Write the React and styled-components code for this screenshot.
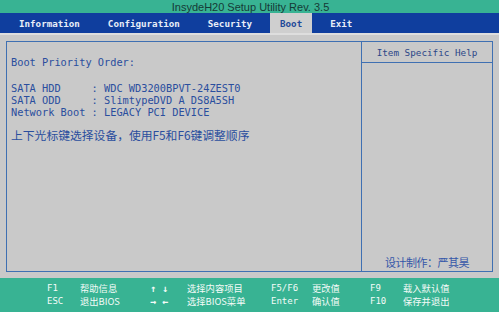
import styled, { createGlobalStyle } from "styled-components";

const Global = createGlobalStyle`
  html, body { margin: 0; padding: 0; }
  body { width: 499px; height: 312px; overflow: hidden; background: #c9c9c9; }
`;

const Screen = styled.div`
  width: 499px;
  height: 312px;
  display: flex;
  flex-direction: column;
  background: #c9c9c9;
`;

const TitleBar = styled.div`
  height: 13px;
  background: #38b393;
  color: #163a36;
  font-family: "Liberation Sans", Arial, sans-serif;
  font-size: 11px;
  line-height: 14px;
  text-align: center;
  padding-left: 2px;
`;

const MenuBar = styled.div`
  height: 20px;
  background: #0f3e9e;
  display: flex;
  gap: 8px;
  padding-left: 9px;
`;

const Tab = styled.div`
  padding: 0 10px;
  line-height: 21px;
  font-family: "DejaVu Sans Mono", monospace;
  font-weight: bold;
  font-size: 9.2px;
  color: ${(p) => (p.$active ? "#1f4a9a" : "#e8eef8")};
  background: ${(p) => (p.$active ? "#cfcfcf" : "transparent")};
`;

const Body = styled.div`
  flex: 1;
  border-top: 2px solid #dedede;
  padding: 6px;
  display: flex;
`;

const Frame = styled.div`
  flex: 1;
  border: 1px solid #3f70b2;
  display: grid;
  grid-template-columns: 1fr 130px;
`;

const Main = styled.div`
  border-right: 1px solid #3f70b2;
  padding: 14px 4px;
  color: #2a4e9e;
  font-family: "DejaVu Sans Mono", monospace;
  font-size: 10.3px;
  line-height: 12px;
`;

const Line = styled.div`
  white-space: pre;
  margin-bottom: ${(p) => p.$gap || 0}px;
`;

const Note = styled.div`
  font-family: "Noto Sans CJK SC", sans-serif;
  font-size: 11.8px;
  line-height: 14px;
`;

const Help = styled.div`
  display: flex;
  flex-direction: column;
`;

const HelpHead = styled.div`
  height: 20px;
  border-bottom: 1px solid #3f70b2;
  text-align: center;
  line-height: 21px;
  color: #2c4688;
  font-family: "DejaVu Sans Mono", monospace;
  font-size: 9.3px;
`;

const Credit = styled.div`
  margin-top: auto;
  padding-bottom: 2px;
  text-align: center;
  color: #3556a8;
  font-family: "Noto Sans CJK SC", sans-serif;
  font-size: 11px;
  line-height: 14px;
  letter-spacing: -0.5px;
`;

const Footer = styled.div`
  height: 34px;
  background: #38b393;
  display: grid;
  grid-template-columns: 33px 70px 37px 84px 41px 58px 33px 1fr;
  grid-auto-rows: 13px;
  align-content: center;
  padding-left: 47px;
  color: #f4fbf8;
`;

const Key = styled.span`
  font-family: "DejaVu Sans Mono", monospace;
  font-size: ${(p) => (p.$arrow ? 10 : 9)}px;
  font-weight: ${(p) => (p.$arrow ? "bold" : "normal")};
  line-height: 13px;
  height: 13px;
  white-space: pre;
  overflow: hidden;
`;

const Desc = styled.span`
  font-family: "Noto Sans CJK SC", sans-serif;
  font-size: 9.3px;
  line-height: 13px;
  height: 13px;
  overflow: hidden;
`;

const keys = [
  ["F1", "帮助信息", "↑ ↓", "选择内容项目", "F5/F6", "更改值", "F9", "载入默认值"],
  ["ESC", "退出BIOS", "→ ←", "选择BIOS菜单", "Enter", "确认值", "F10", "保存并退出"],
];

export default function App() {
  return (
    <Screen>
      <Global />
      <TitleBar>InsydeH20 Setup Utility Rev. 3.5</TitleBar>
      <MenuBar>
        <Tab>Information</Tab>
        <Tab>Configuration</Tab>
        <Tab>Security</Tab>
        <Tab $active>Boot</Tab>
        <Tab>Exit</Tab>
      </MenuBar>
      <Body>
        <Frame>
          <Main>
            <Line $gap={14}>Boot Priority Order:</Line>
            <Line>{"SATA HDD     : WDC WD3200BPVT-24ZEST0"}</Line>
            <Line>{"SATA ODD     : SlimtypeDVD A DS8A5SH"}</Line>
            <Line $gap={10}>{"Network Boot : LEGACY PCI DEVICE"}</Line>
            <Note>上下光标键选择设备，使用F5和F6键调整顺序</Note>
          </Main>
          <Help>
            <HelpHead>Item Specific Help</HelpHead>
            <Credit>设计制作：严其昊</Credit>
          </Help>
        </Frame>
      </Body>
      <Footer>
        {keys.map((row) =>
          row.map((t, i) =>
            i % 2 === 0 ? (
              <Key key={t} $arrow={i === 2}>{t}</Key>
            ) : (
              <Desc key={t}>{t}</Desc>
            )
          )
        )}
      </Footer>
    </Screen>
  );
}
